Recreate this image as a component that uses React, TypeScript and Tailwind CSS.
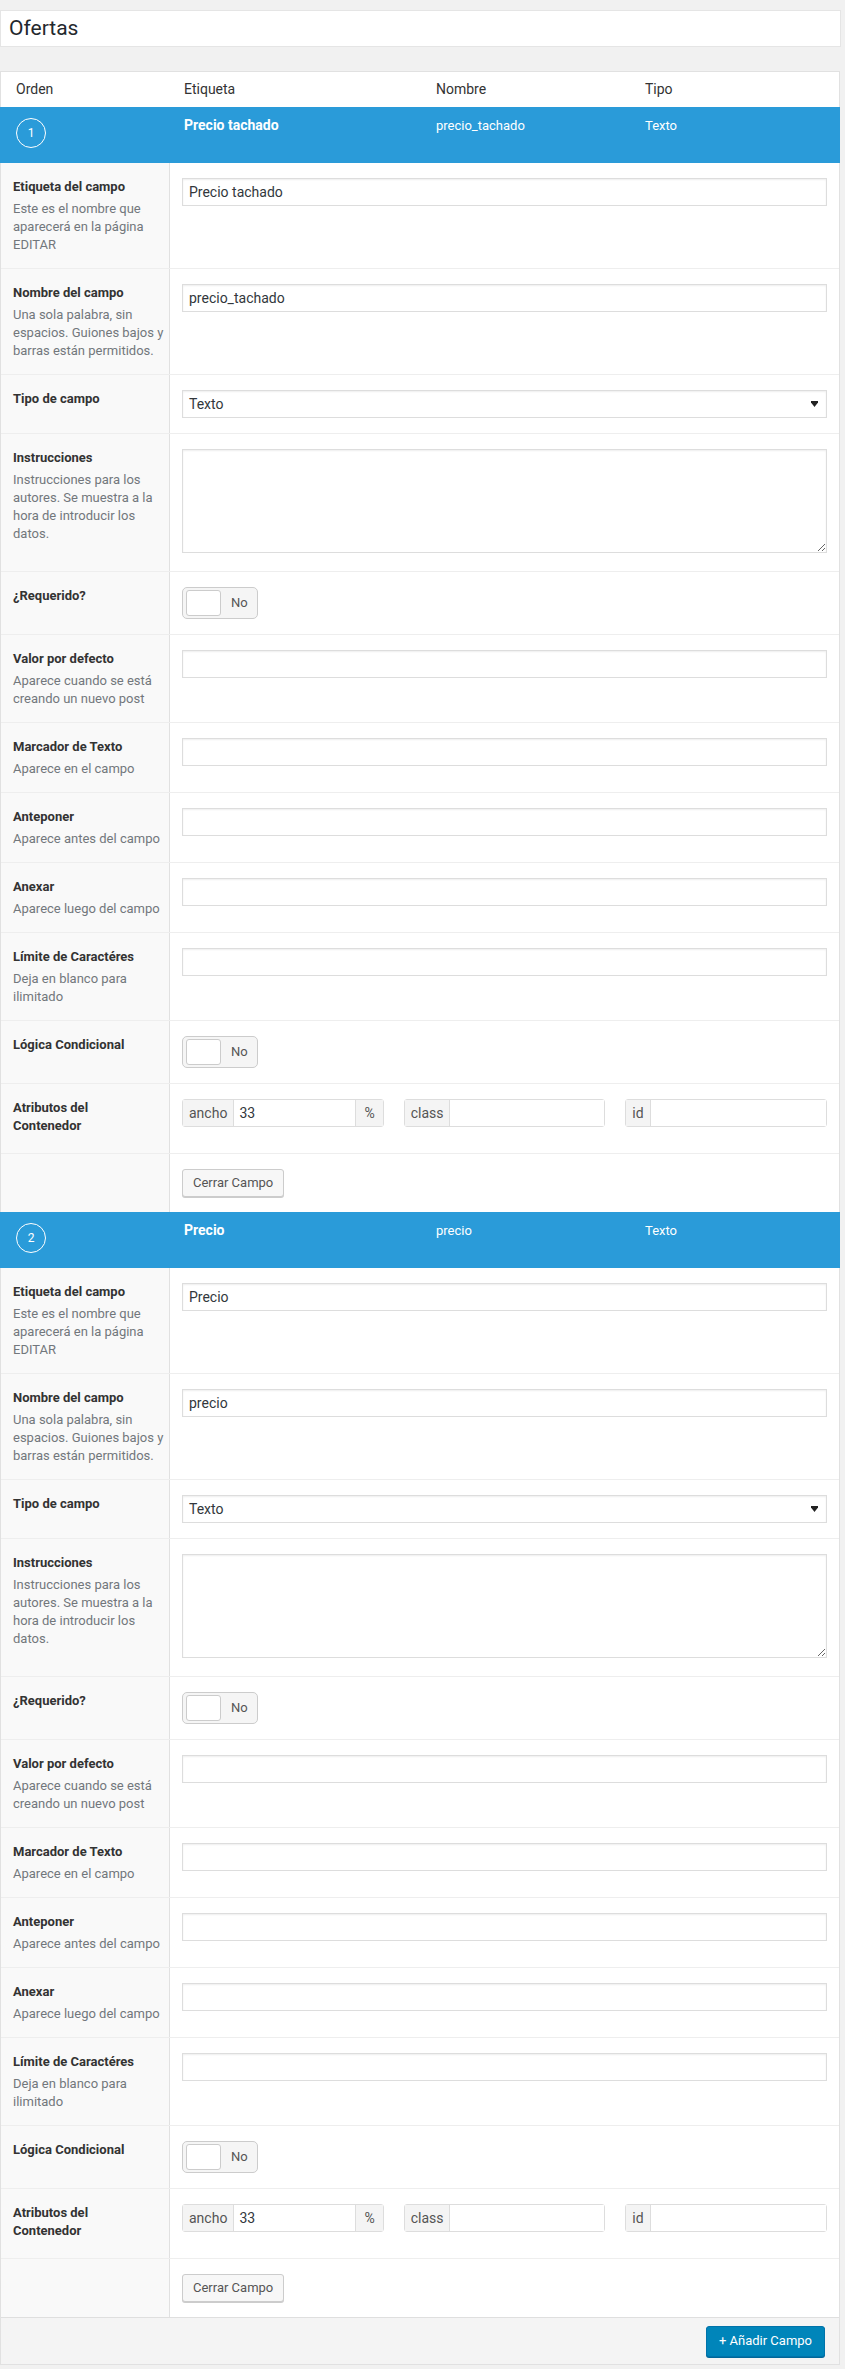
import type { ReactNode } from 'react';

type Field = {
  label: string;
  name: string;
  type: string;
};

const fields: Field[] = [
  { label: 'Precio tachado', name: 'precio_tachado', type: 'Texto' },
  { label: 'Precio', name: 'precio', type: 'Texto' },
];

const cols = 'grid grid-cols-[168px_252px_209px_1fr]';

function TextInput({ value = '' }: { value?: string }) {
  return (
    <div className="flex h-[28px] items-center border border-[#ddd] bg-white px-[6px] text-[14px] text-[#32373c] shadow-[inset_0_1px_2px_rgba(0,0,0,0.07)]">
      {value}
    </div>
  );
}

function Toggle() {
  return (
    <div className="flex h-[32px] w-[76px] items-center rounded-[5px] border border-[#ccc] bg-[#f5f5f5] p-[3px]">
      <div className="h-[26px] w-[35px] rounded-[3px] border border-[#ccc] bg-white" />
      <span className="ml-[10px] text-[13px] text-[#555]">No</span>
    </div>
  );
}

function Addon({ prefix, value = '', suffix }: { prefix: string; value?: string; suffix?: string }) {
  return (
    <div className="flex h-[28px] rounded-[3px] border border-[#ddd] text-[14px]">
      <span className="flex items-center border-r border-[#ddd] bg-[#f4f4f4] px-[6px] text-[#555]">{prefix}</span>
      <span className="flex flex-1 items-center bg-white px-[5px] text-[#32373c]">{value}</span>
      {suffix && (
        <span className="flex items-center border-l border-[#ddd] bg-[#f4f4f4] px-[8px] text-[#555]">{suffix}</span>
      )}
    </div>
  );
}

function Row({ label, desc = [], first, children }: { label: string[]; desc?: string[]; first?: boolean; children: ReactNode }) {
  return (
    <div className={`grid grid-cols-[169px_1fr] ${first ? '' : 'border-t border-[#eee]'}`}>
      <div className="border-r border-[#e1e1e1] bg-[#f9f9f9] px-3 pt-[15px] pb-[14px]">
        {label.length > 0 && (
          <div className="mb-[4px] text-[13px] leading-[18px] font-bold text-[#333]">
            {label.map((l) => (
              <div key={l} className="whitespace-nowrap">{l}</div>
            ))}
          </div>
        )}
        {desc.map((d) => (
          <div key={d} className="text-[13px] leading-[18px] whitespace-nowrap text-[#72777c]">
            {d}
          </div>
        ))}
      </div>
      <div className="px-3 py-[15px]">{children}</div>
    </div>
  );
}

function FieldSettings({ field }: { field: Field }) {
  return (
    <div>
      <Row first label={['Etiqueta del campo']} desc={['Este es el nombre que', 'aparecerá en la página', 'EDITAR']}>
        <TextInput value={field.label} />
      </Row>
      <Row label={['Nombre del campo']} desc={['Una sola palabra, sin', 'espacios. Guiones bajos y', 'barras están permitidos.']}>
        <TextInput value={field.name} />
      </Row>
      <Row label={['Tipo de campo']}>
        <div className="flex h-[28px] items-center justify-between border border-[#ddd] bg-white pr-[8px] pl-[6px] text-[14px] text-[#32373c] shadow-[inset_0_1px_2px_rgba(0,0,0,0.07)]">
          <span>{field.type}</span>
          <svg width="7" height="6" viewBox="0 0 7 6">
            <path d="M0 0h7v1.5L3.5 6 0 1.5z" fill="#222" />
          </svg>
        </div>
      </Row>
      <Row label={['Instrucciones']} desc={['Instrucciones para los', 'autores. Se muestra a la', 'hora de introducir los', 'datos.']}>
        <textarea
          readOnly
          className="mb-[3px] block h-[104px] w-full border border-[#ddd] bg-white shadow-[inset_0_1px_2px_rgba(0,0,0,0.07)] outline-none"
        />
      </Row>
      <Row label={['¿Requerido?']}>
        <Toggle />
      </Row>
      <Row label={['Valor por defecto']} desc={['Aparece cuando se está', 'creando un nuevo post']}>
        <TextInput />
      </Row>
      <Row label={['Marcador de Texto']} desc={['Aparece en el campo']}>
        <TextInput />
      </Row>
      <Row label={['Anteponer']} desc={['Aparece antes del campo']}>
        <TextInput />
      </Row>
      <Row label={['Anexar']} desc={['Aparece luego del campo']}>
        <TextInput />
      </Row>
      <Row label={['Límite de Caractéres']} desc={['Deja en blanco para', 'ilimitado']}>
        <TextInput />
      </Row>
      <Row label={['Lógica Condicional']}>
        <Toggle />
      </Row>
      <Row label={['Atributos del', 'Contenedor']}>
        <div className="grid grid-cols-3 gap-5">
          <Addon prefix="ancho" value="33" suffix="%" />
          <Addon prefix="class" />
          <Addon prefix="id" />
        </div>
      </Row>
      <Row label={[]}>
        <button className="h-[28px] rounded-[3px] border border-[#ccc] bg-[#f7f7f7] px-[10px] text-[13px] text-[#555] shadow-[0_1px_0_#ccc]">
          Cerrar Campo
        </button>
      </Row>
    </div>
  );
}

export default function App() {
  return (
    <div className="min-h-[2369px] bg-[#f1f1f1] pt-[10px] font-['Roboto',sans-serif]">
      <div className="flex h-[37px] w-[841px] items-center border border-[#e5e5e5] bg-white px-[8px] text-[21px] text-[#23282d]">
        Ofertas
      </div>

      <div className="mt-[24px] w-[840px] border border-[#e1e1e1] bg-white">
        <div className={`${cols} h-[35px] items-center text-[14px] text-[#333]`}>
          <span className="pl-[15px]">Orden</span>
          <span className="pl-[15px]">Etiqueta</span>
          <span className="pl-[15px]">Nombre</span>
          <span className="pl-[15px]">Tipo</span>
        </div>

        {fields.map((field, i) => (
          <div key={field.name}>
            <div className={`${cols} -mx-px h-[56px] items-start bg-[#2a9bd9] text-white`}>
              <div className="pt-[11px] pl-[16px]">
                <div className="flex h-[30px] w-[30px] items-center justify-center rounded-full border border-white text-[12px]">
                  {i + 1}
                </div>
              </div>
              <span className="pt-[8px] pl-[16px] text-[14px] leading-[20px] font-bold">{field.label}</span>
              <span className="pt-[9px] pl-[16px] text-[13px] leading-[20px]">{field.name}</span>
              <span className="pt-[9px] pl-[16px] text-[13px] leading-[20px]">{field.type}</span>
            </div>
            <FieldSettings field={field} />
          </div>
        ))}

        <div className="flex h-[47px] items-center justify-end border-t border-[#dfdfdf] bg-[#f4f4f4] pr-[14px]">
          <button className="h-[31px] rounded-[3px] border border-[#0073aa] bg-[#0085ba] px-[12px] text-[13px] text-white shadow-[0_1px_0_#006799]">
            + Añadir Campo
          </button>
        </div>
      </div>
    </div>
  );
}
